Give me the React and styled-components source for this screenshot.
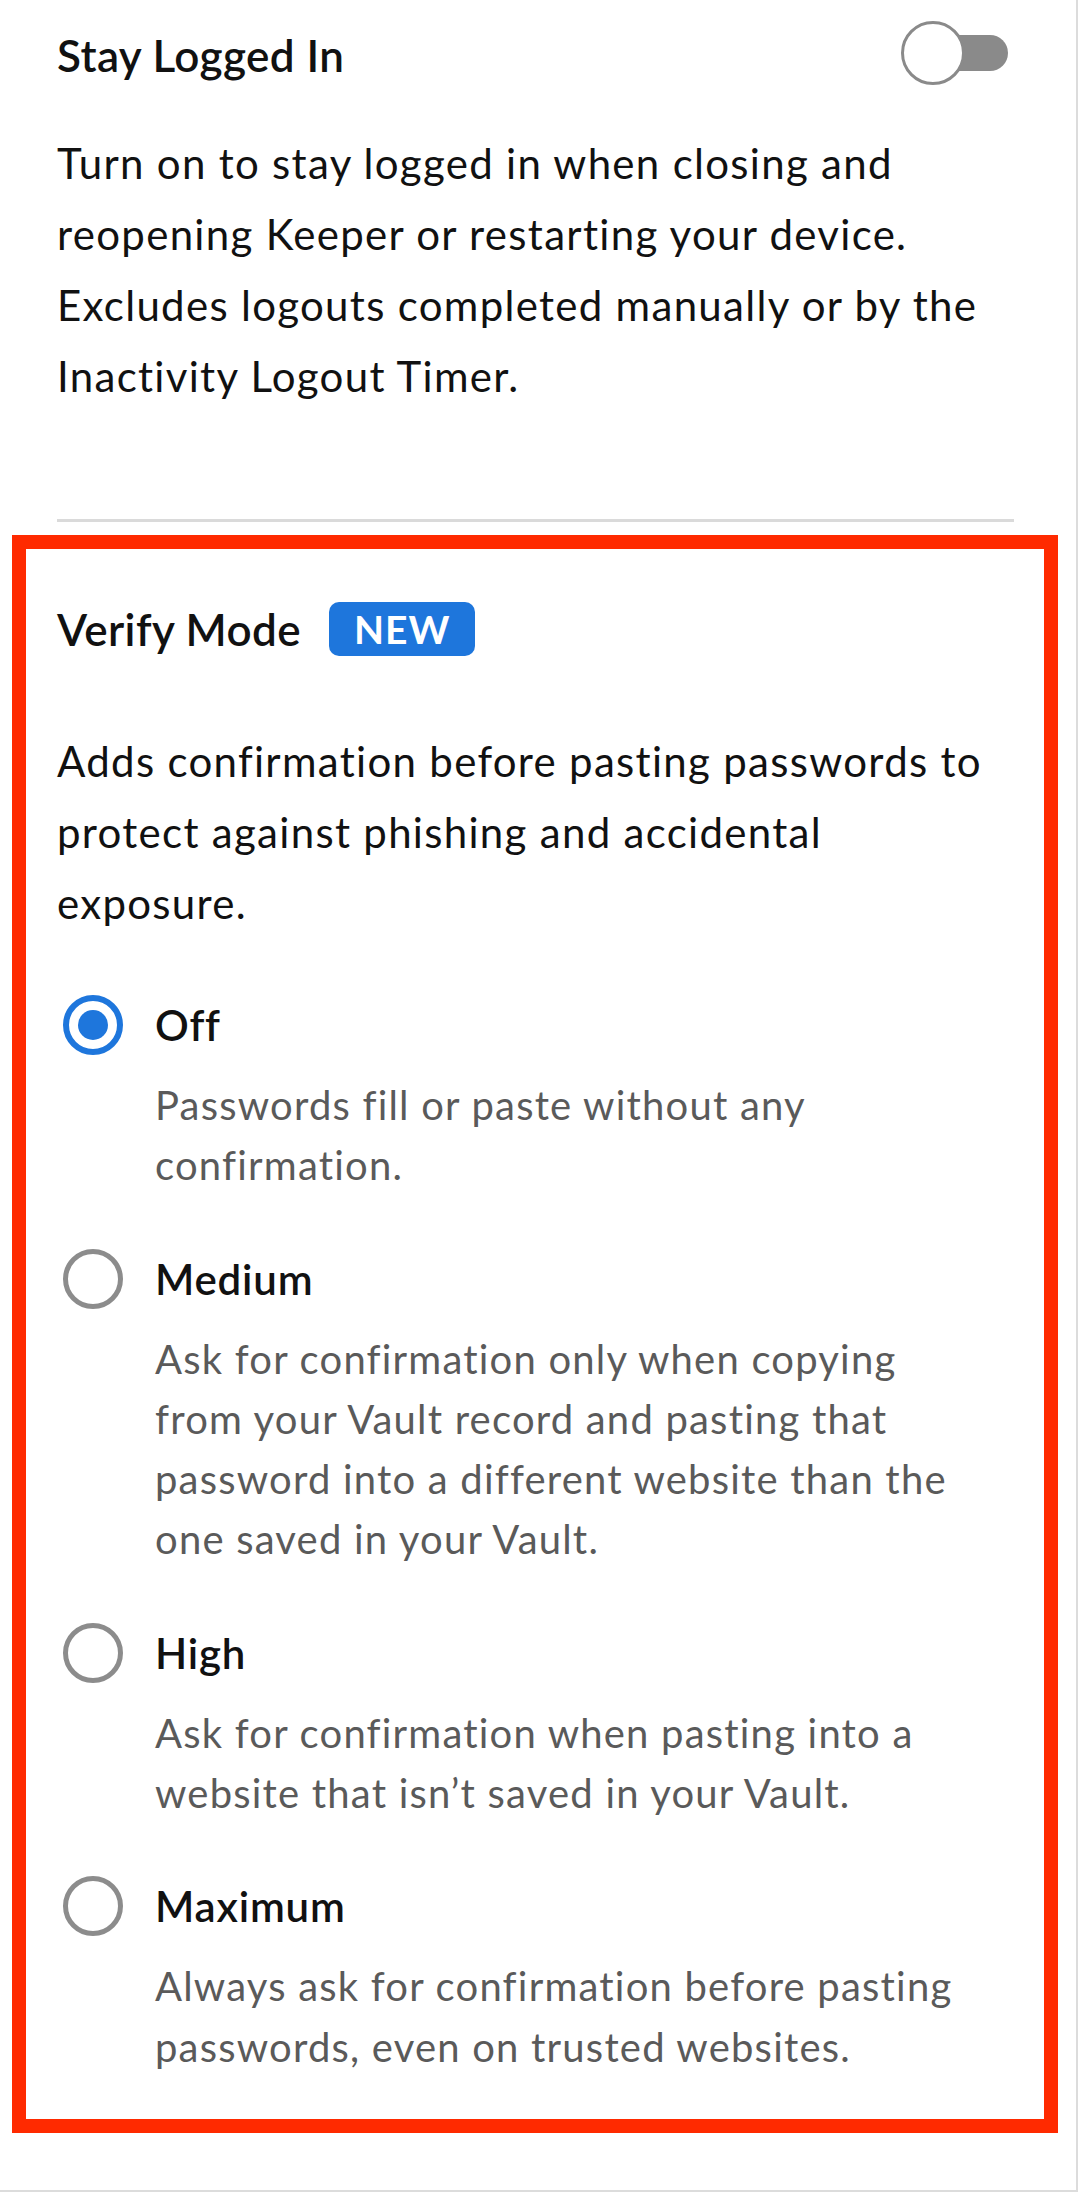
import React from 'react'
import styled, { createGlobalStyle } from 'styled-components'

const GlobalStyle = createGlobalStyle`
body{
   margin: 0;
   background: #fff;
   font-family: Lato, "Noto Sans", sans-serif;
   color: #111;
}
`

const Page = styled.div`
width: 1078px;
min-height: 2192px;
box-sizing: border-box;
border-right: 2px solid #dcdcdc;
border-bottom: 2px solid #dcdcdc;
`

const Top = styled.div`
padding: 25px 62px 0 57px;
`

const HeaderRow = styled.div`
display: flex;
align-items: center;
justify-content: space-between;
height: 60px;
`

const Title = styled.h2`
margin: 0;
font-size: 44px;
font-weight: 600;
line-height: 60px;
letter-spacing: 0.4px;
`

const Toggle = styled.div`
position: relative;
width: 107px;
height: 64px;
margin-right: 6px;
margin-top: -4px;
.track{
   position: absolute;
   right: 0;
   top: 14px;
   width: 80px;
   height: 36px;
   border-radius: 18px;
   background-color: #8a8a8a;
}
.knob{
   position: absolute;
   left: 0;
   top: 0;
   width: 64px;
   height: 64px;
   box-sizing: border-box;
   border-radius: 50%;
   border: 3px solid #8a8a8a;
   background-color: #fff;
}
`

const Text = styled.p`
margin: ${p => p.$top || 0}px 0 0;
font-size: 42px;
line-height: 71px;
font-weight: 400;
letter-spacing: 1.3px;
color: #111;
`

const Divider = styled.div`
margin-top: 107px;
height: 3px;
background-color: #dadada;
`

const Boxed = styled.section`
margin: 13px 0 0 12px;
width: 1046px;
box-sizing: border-box;
border: 14px solid #ff2a00;
padding: 53px 31px 42px;
`

const TitleRow = styled.div`
display: flex;
align-items: center;
gap: 28px;
height: 54px;
`

const Badge = styled.span`
display: flex;
align-items: center;
height: 54px;
padding: 0 25px;
border-radius: 10px;
background-color: #1e76dc;
color: #fff;
font-size: 39px;
font-weight: 700;
letter-spacing: 1px;
`

const Options = styled.div`
margin-top: 56px;
display: flex;
flex-direction: column;
gap: 53px;
`

const Option = styled.div`
display: flex;
`

const RadioCol = styled.div`
width: 98px;
flex-shrink: 0;
height: 60px;
display: flex;
align-items: center;
padding-left: 6px;
box-sizing: border-box;
`

const Radio = styled.span`
width: 60px;
height: 60px;
box-sizing: border-box;
border-radius: 50%;
border: ${p => p.$on ? '6px solid #1e76dc' : '5px solid #8c8c8c'};
display: flex;
align-items: center;
justify-content: center;
&::after{
   content: '';
   display: ${p => p.$on ? 'block' : 'none'};
   width: 30px;
   height: 30px;
   border-radius: 50%;
   background-color: #1e76dc;
}
`

const OptBody = styled.div`
display: flex;
flex-direction: column;
`

const Label = styled.div`
font-size: 42px;
font-weight: 600;
line-height: 60px;
letter-spacing: 0.8px;
color: #111;
`

const OptDesc = styled.div`
margin-top: 20px;
max-width: 815px;
font-size: 40px;
line-height: 60.3px;
letter-spacing: 1.2px;
color: #5a5a5a;
`

const modes = [
  { label: 'Off', desc: 'Passwords fill or paste without any confirmation.', on: true },
  { label: 'Medium', desc: 'Ask for confirmation only when copying from your Vault record and pasting that password into a different website than the one saved in your Vault.' },
  { label: 'High', desc: 'Ask for confirmation when pasting into a website that isn\u2019t saved in your Vault.' },
  { label: 'Maximum', desc: 'Always ask for confirmation before pasting passwords, even on trusted websites.' },
]

const App = () => {
  return (
    <Page>
      <GlobalStyle />
      <Top>
        <HeaderRow>
          <Title>Stay Logged In</Title>
          <Toggle>
            <div className='track'></div>
            <div className='knob'></div>
          </Toggle>
        </HeaderRow>
        <Text $top={43}>
          Turn on to stay logged in when closing and reopening Keeper or restarting your device. Excludes logouts completed manually or by the Inactivity Logout Timer.
        </Text>
        <Divider />
      </Top>
      <Boxed>
        <TitleRow>
          <Title>Verify Mode</Title>
          <Badge>NEW</Badge>
        </TitleRow>
        <Text $top={70}>
          Adds confirmation before pasting passwords to protect against phishing and accidental exposure.
        </Text>
        <Options>
          {modes.map(m => (
            <Option key={m.label}>
              <RadioCol><Radio $on={m.on} /></RadioCol>
              <OptBody>
                <Label>{m.label}</Label>
                <OptDesc>{m.desc}</OptDesc>
              </OptBody>
            </Option>
          ))}
        </Options>
      </Boxed>
    </Page>
  )
}

export default App
